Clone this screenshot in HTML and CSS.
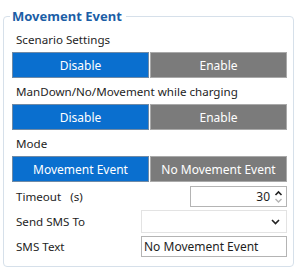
FILE: index.html
```html
<!DOCTYPE html>
<html lang="en">
<head>
    <meta charset="UTF-8">
    <meta name="viewport" content="width=device-width, initial-scale=1.0">
    <title>Movement Event</title>
    <link rel="stylesheet" href="styles.css">
</head>
<body>
    <fieldset class="group">
        <legend>Movement Event</legend>

        <div class="field-label">Scenario Settings</div>
        <div class="toggle">
            <button class="on">Disable</button>
            <button class="off">Enable</button>
        </div>

        <div class="field-label">ManDown/No/Movement while charging</div>
        <div class="toggle">
            <button class="on">Disable</button>
            <button class="off">Enable</button>
        </div>

        <div class="field-label">Mode</div>
        <div class="toggle">
            <button class="on">Movement Event</button>
            <button class="off">No Movement Event</button>
        </div>

        <div class="form-row">
            <span class="row-label">Timeout&nbsp;&nbsp;&nbsp;(s)</span>
            <div class="spin">
                <span class="spin-value">30</span>
                <svg class="spin-arrows" width="9" height="16" viewBox="0 0 9 16">
                    <path d="M1.5 6 L4.5 3 L7.5 6" fill="none" stroke="#222" stroke-width="1.6"/>
                    <path d="M1.5 10 L4.5 13 L7.5 10" fill="none" stroke="#b5b5b5" stroke-width="1.4"/>
                </svg>
            </div>
        </div>

        <div class="form-row">
            <span class="row-label">Send SMS To</span>
            <div class="select">
                <svg width="9" height="6" viewBox="0 0 9 6">
                    <path d="M1 1 L4.5 4.5 L8 1" fill="none" stroke="#222" stroke-width="1.6"/>
                </svg>
            </div>
        </div>

        <div class="form-row">
            <span class="row-label">SMS Text</span>
            <div class="text-box">No Movement Event</div>
        </div>
    </fieldset>
</body>
</html>
```

FILE: styles.css
```css
:root {
    --blue: #0a6fcf;
    --grey: #7b7b7b;
    --title: #1b5ea6;
    --text: #1e1e1e;
    --frame: #d6e0ea;
}

* {
    box-sizing: border-box;
}

body {
    margin: 0;
    background: #fff;
    font-family: "Noto Sans", "Open Sans", Arial, sans-serif;
    font-size: 11.6px;
    color: var(--text);
}

.group {
    width: 291px;
    height: 260px;
    margin: 7px 0 0 3px;
    padding: 3px 6px 0 8px;
    border: 1px solid var(--frame);
    border-radius: 4px;
}

.group legend {
    margin-left: -2px;
    padding: 0 4px 0 2px;
    color: var(--title);
    font-weight: bold;
    font-size: 13px;
}

.field-label {
    height: 24px;
    line-height: 24px;
    padding-left: 4px;
}

.toggle {
    display: grid;
    grid-template-columns: 1fr 1fr;
    gap: 1px;
    height: 26px;
    margin-bottom: 2px;
}

.toggle button {
    font: inherit;
    font-size: 12px;
    color: #fff;
    border: 1px solid;
    padding: 0;
    cursor: pointer;
}

.toggle .on {
    background: var(--blue);
    border-color: #6f8aa6;
}

.toggle .off {
    background: var(--grey);
    border-color: #a9a9a9;
}

.form-row {
    display: flex;
    align-items: center;
    justify-content: space-between;
    height: 25px;
    padding-left: 4px;
}

.form-row:first-of-type {
    margin-top: 1px;
}

.spin {
    display: flex;
    align-items: center;
    justify-content: flex-end;
    width: 97px;
    height: 21px;
    border: 1px solid #b4b4b4;
    padding-right: 3px;
    font-size: 12px;
}

.spin-value {
    margin-right: 4px;
}

.select {
    display: flex;
    align-items: center;
    justify-content: flex-end;
    width: 146px;
    height: 23px;
    border: 1px solid #e3e3e3;
    padding-right: 6px;
}

.text-box {
    width: 146px;
    height: 21px;
    line-height: 19px;
    border: 1px solid #b4b4b4;
    padding-left: 2px;
    font-size: 12px;
}
```
